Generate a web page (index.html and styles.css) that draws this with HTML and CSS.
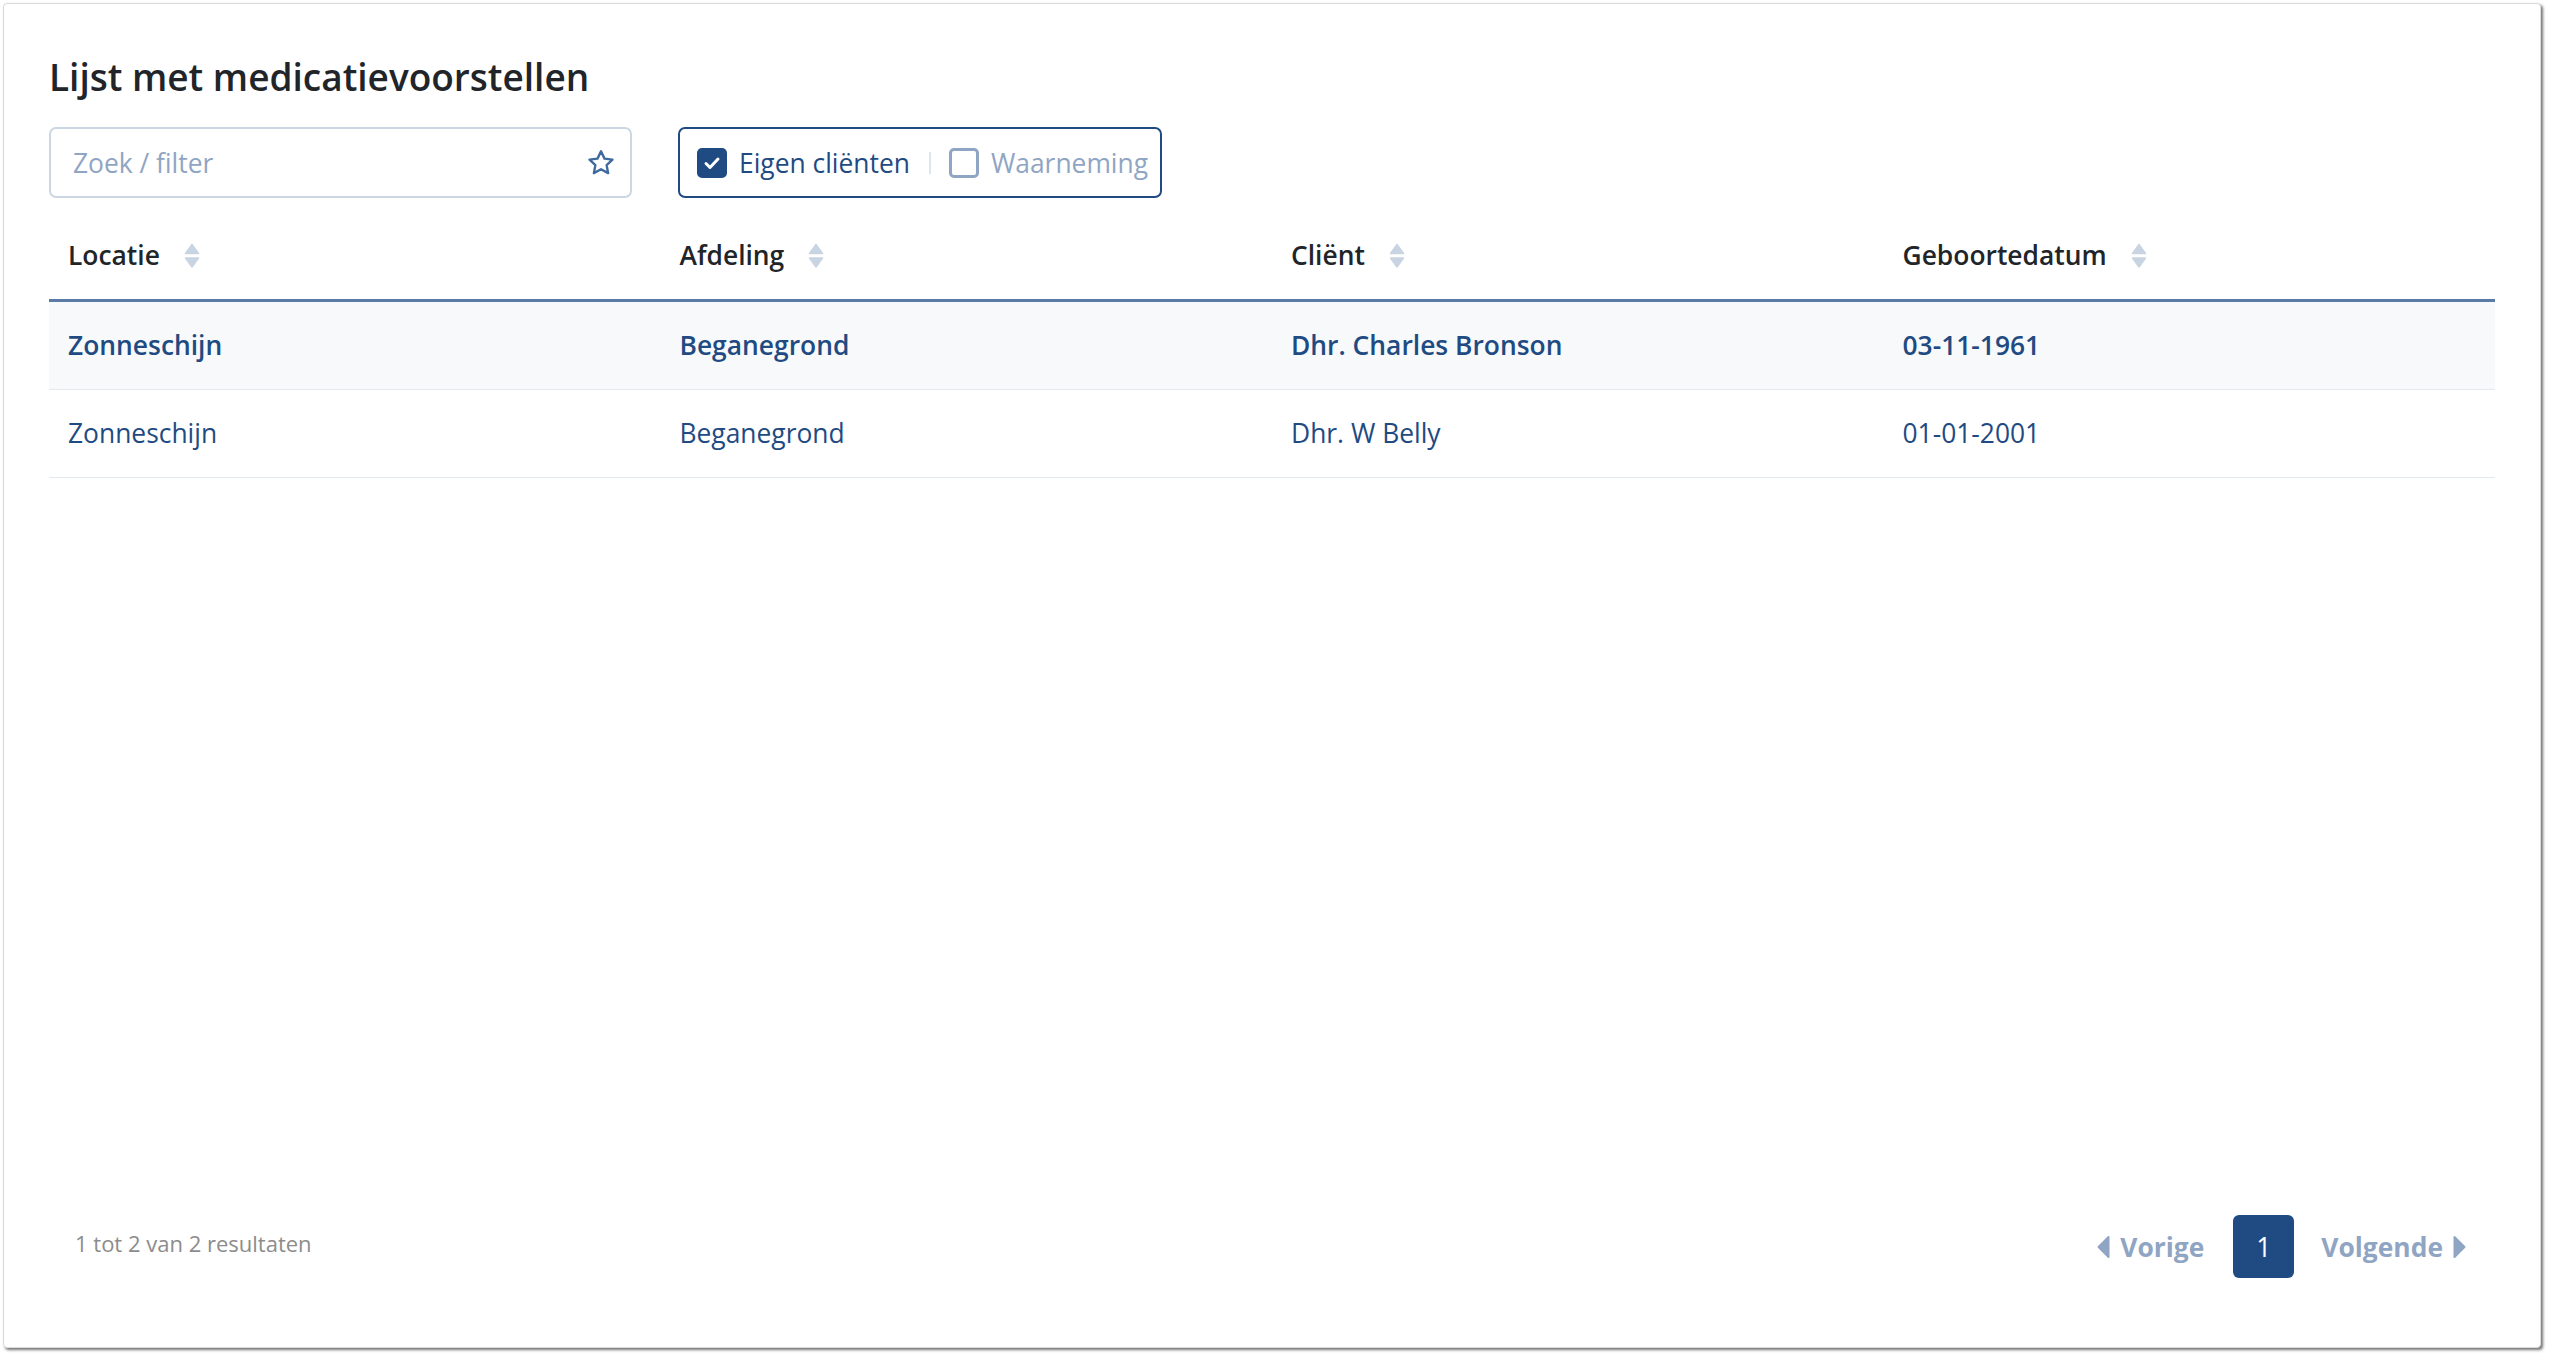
FILE: index.html
```html
<!DOCTYPE html>
<html lang="nl">
<head>
  <meta charset="UTF-8">
  <meta name="viewport" content="width=device-width, initial-scale=1.0">
  <title>Medicatievoorstellen</title>
  <link rel="stylesheet" href="styles.css">
</head>
<body>
  <div class="panel">
    <h1 class="panel-title">Lijst met medicatievoorstellen</h1>

    <div class="toolbar">
      <div class="search">
        <input type="text" class="search-input" placeholder="Zoek / filter">
        <svg class="search-star" viewBox="0 0 24 24">
          <polygon points="12,2.6 14.8,8.5 21.2,9.3 16.5,13.7 17.7,20.1 12,17 6.3,20.1 7.5,13.7 2.8,9.3 9.2,8.5"></polygon>
        </svg>
      </div>

      <div class="scope">
        <label class="scope-option scope-option-on">
          <span class="check check-on">
            <svg viewBox="0 0 24 24"><path d="M6 12.5l4 4 8-8.5"></path></svg>
          </span>
          Eigen cliënten
        </label>
        <span class="scope-divider"></span>
        <label class="scope-option">
          <span class="check"></span>
          Waarneming
        </label>
      </div>
    </div>

    <table class="list">
      <thead>
        <tr>
          <th>Locatie <svg class="sort" viewBox="0 0 16 26"><path d="M8 1.5L14.5 10.5H1.5Z"/><path d="M1.5 15H14.5L8 24Z"/></svg></th>
          <th>Afdeling <svg class="sort" viewBox="0 0 16 26"><path d="M8 1.5L14.5 10.5H1.5Z"/><path d="M1.5 15H14.5L8 24Z"/></svg></th>
          <th>Cliënt <svg class="sort" viewBox="0 0 16 26"><path d="M8 1.5L14.5 10.5H1.5Z"/><path d="M1.5 15H14.5L8 24Z"/></svg></th>
          <th>Geboortedatum <svg class="sort" viewBox="0 0 16 26"><path d="M8 1.5L14.5 10.5H1.5Z"/><path d="M1.5 15H14.5L8 24Z"/></svg></th>
        </tr>
      </thead>
      <tbody>
        <tr class="row-active">
          <td>Zonneschijn</td>
          <td>Beganegrond</td>
          <td>Dhr. Charles Bronson</td>
          <td>03-11-1961</td>
        </tr>
        <tr>
          <td>Zonneschijn</td>
          <td>Beganegrond</td>
          <td>Dhr. W Belly</td>
          <td>01-01-2001</td>
        </tr>
      </tbody>
    </table>

    <div class="list-footer">
      <span class="list-count">1 tot 2 van 2 resultaten</span>
      <div class="pager">
        <a class="pager-link">
          <svg class="caret" viewBox="0 0 13 24"><path d="M11.5 2L1.5 12L11.5 22Z"/></svg>
          Vorige
        </a>
        <span class="pager-page">1</span>
        <a class="pager-link">
          Volgende
          <svg class="caret" viewBox="0 0 13 24"><path d="M1.5 2L11.5 12L1.5 22Z"/></svg>
        </a>
      </div>
    </div>
  </div>
</body>
</html>
```

FILE: styles.css
```css
body {
  margin: 0;
  padding: 3px 8px 8px 3px;
  background-color: #ffffff;
  font-family: "Open Sans", "Liberation Sans", sans-serif;
  font-size: 26.4px;
  color: #212529;
}
.panel {
  box-sizing: border-box;
  height: calc(100vh - 11px);
  display: flex;
  flex-direction: column;
  padding: 50px 45px 0 45px;
  background-color: #ffffff;
  border: 1px solid #dadada;
  border-radius: 4px;
  box-shadow: 2px 2px 3px rgba(0, 0, 0, 0.55);
}
.panel-title {
  margin: 0 0 27px 0;
  font-size: 37px;
  line-height: 46px;
  font-weight: 600;
  color: #212529;
}
.toolbar {
  display: flex;
  gap: 46px;
}
.search {
  box-sizing: border-box;
  width: 583px;
  height: 71px;
  display: flex;
  align-items: center;
  border: 2px solid #ccd7e4;
  border-radius: 7px;
  padding: 0 14px 0 22px;
}
.search-input {
  flex: 1;
  border: none;
  outline: none;
  padding: 0;
  font-family: inherit;
  font-size: 26.4px;
  color: #1f4b82;
}
.search-input::placeholder {
  color: #8fa5c3;
}
.search-star {
  width: 30px;
  height: 30px;
  fill: none;
  stroke: #3f6a9e;
  stroke-width: 1.9;
  stroke-linejoin: round;
}
.scope {
  box-sizing: border-box;
  height: 71px;
  display: flex;
  align-items: center;
  border: 2px solid #1f4b82;
  border-radius: 7px;
  padding: 0 12px 0 17px;
}
.scope-option {
  display: flex;
  align-items: center;
  gap: 12px;
  color: #8fa5c3;
  cursor: pointer;
}
.scope-option-on {
  color: #1f4b82;
}
.check {
  box-sizing: border-box;
  width: 30px;
  height: 30px;
  border: 3px solid #8fa5c3;
  border-radius: 5px;
}
.check-on {
  background-color: #1f4b82;
  border-color: #1f4b82;
}
.check svg {
  display: block;
  width: 24px;
  height: 24px;
  fill: none;
  stroke: #ffffff;
  stroke-width: 3;
  stroke-linecap: round;
  stroke-linejoin: round;
}
.scope-divider {
  width: 2px;
  height: 22px;
  margin: 0 18px 0 19px;
  background-color: #dfe5ec;
}
.list {
  width: 100%;
  margin-top: 15px;
  border-collapse: collapse;
  table-layout: fixed;
}
.list th {
  padding: 23px 19px 24px 19px;
  text-align: left;
  font-weight: 600;
  line-height: 39px;
  color: #212529;
  border-bottom: 3px solid #5b7ba6;
}
.sort {
  width: 16px;
  height: 26px;
  margin-left: 17px;
  vertical-align: -4px;
  fill: #c9d4e2;
  stroke: #c9d4e2;
  stroke-width: 1.5;
  stroke-linejoin: round;
}
.list td {
  padding: 24px 19px;
  line-height: 39px;
  color: #1f4b82;
  border-bottom: 1px solid #e3e9f0;
}
.row-active td {
  background-color: #f7f9fb;
  font-weight: 600;
}
.list-footer {
  margin-top: auto;
  display: flex;
  align-items: center;
  justify-content: space-between;
  padding: 0 29px 69px 26px;
}
.list-count {
  margin-bottom: 8px;
  font-size: 22px;
  color: #8c8c8c;
}
.pager {
  display: flex;
  align-items: center;
}
.pager-link {
  display: flex;
  align-items: center;
  gap: 10px;
  font-weight: 700;
  color: #8fa5c3;
  cursor: pointer;
}
.caret {
  width: 13px;
  height: 24px;
  fill: #8fa5c3;
  stroke: #8fa5c3;
  stroke-width: 2;
  stroke-linejoin: round;
}
.pager-page {
  width: 61px;
  height: 63px;
  margin: 0 27px 0 29px;
  display: flex;
  align-items: center;
  justify-content: center;
  background-color: #1f4b82;
  border-radius: 6px;
  font-weight: 400;
  color: #ffffff;
}
```
